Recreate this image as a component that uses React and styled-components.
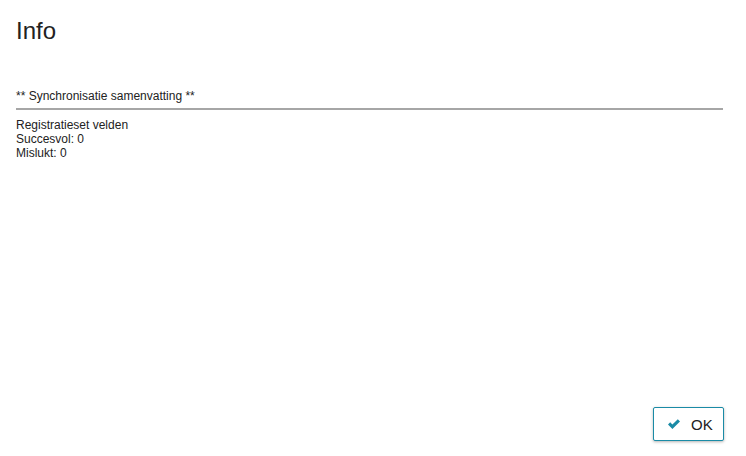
import React from 'react';
import styled, {createGlobalStyle} from 'styled-components';

const GlobalStyle = createGlobalStyle`
  html, body, #root {
    margin: 0;
    height: 100%;
  }
  body {
    font-family: "Liberation Sans", Arial, sans-serif;
    color: #222;
    background: #fff;
  }
`;

const Dialog = styled.div`
  box-sizing: border-box;
  height: 100vh;
  display: flex;
  flex-direction: column;
  padding: 16px 22px 15px 16px;
`;

const Title = styled.h1`
  margin: 0;
  font-size: 24px;
  font-weight: normal;
  line-height: 30px;
  color: #222;
`;

const Body = styled.div`
  flex: 1;
  padding-top: 43px;
  padding-right: 1px;
  font-size: 12px;
  line-height: 14px;
`;

const Heading = styled.div`
  padding-bottom: 5px;
  border-bottom: 2px solid #a6a6a6;
  margin-bottom: 8px;
`;

const Line = styled.div``;

const Footer = styled.div`
  display: flex;
  justify-content: flex-end;
`;

const Button = styled.button`
  display: flex;
  align-items: center;
  gap: 10px;
  height: 34px;
  width: 71px;
  padding: 0 0 0 13px;
  background: #fff;
  border: 1px solid #1a8ba6;
  border-radius: 2px;
  box-shadow: 0 1px 3px rgba(0, 0, 0, 0.3);
  font-family: inherit;
  font-size: 15px;
  color: #222;
  cursor: pointer;
`;

const Check = () => (
  <svg width="14" height="12" viewBox="0 0 14 12">
    <path d="M1 6.5 L3.2 4.3 L5.4 6.6 L10.8 1.2 L13 3.4 L5.4 11 Z" fill="#1a8ba6" />
  </svg>
);

const App = () => (
  <>
    <GlobalStyle />
    <Dialog>
      <Title>Info</Title>
      <Body>
        <Heading>** Synchronisatie samenvatting **</Heading>
        <Line>Registratieset velden</Line>
        <Line>Succesvol: 0</Line>
        <Line>Mislukt: 0</Line>
      </Body>
      <Footer>
        <Button>
          <Check />
          OK
        </Button>
      </Footer>
    </Dialog>
  </>
);

export default App;
